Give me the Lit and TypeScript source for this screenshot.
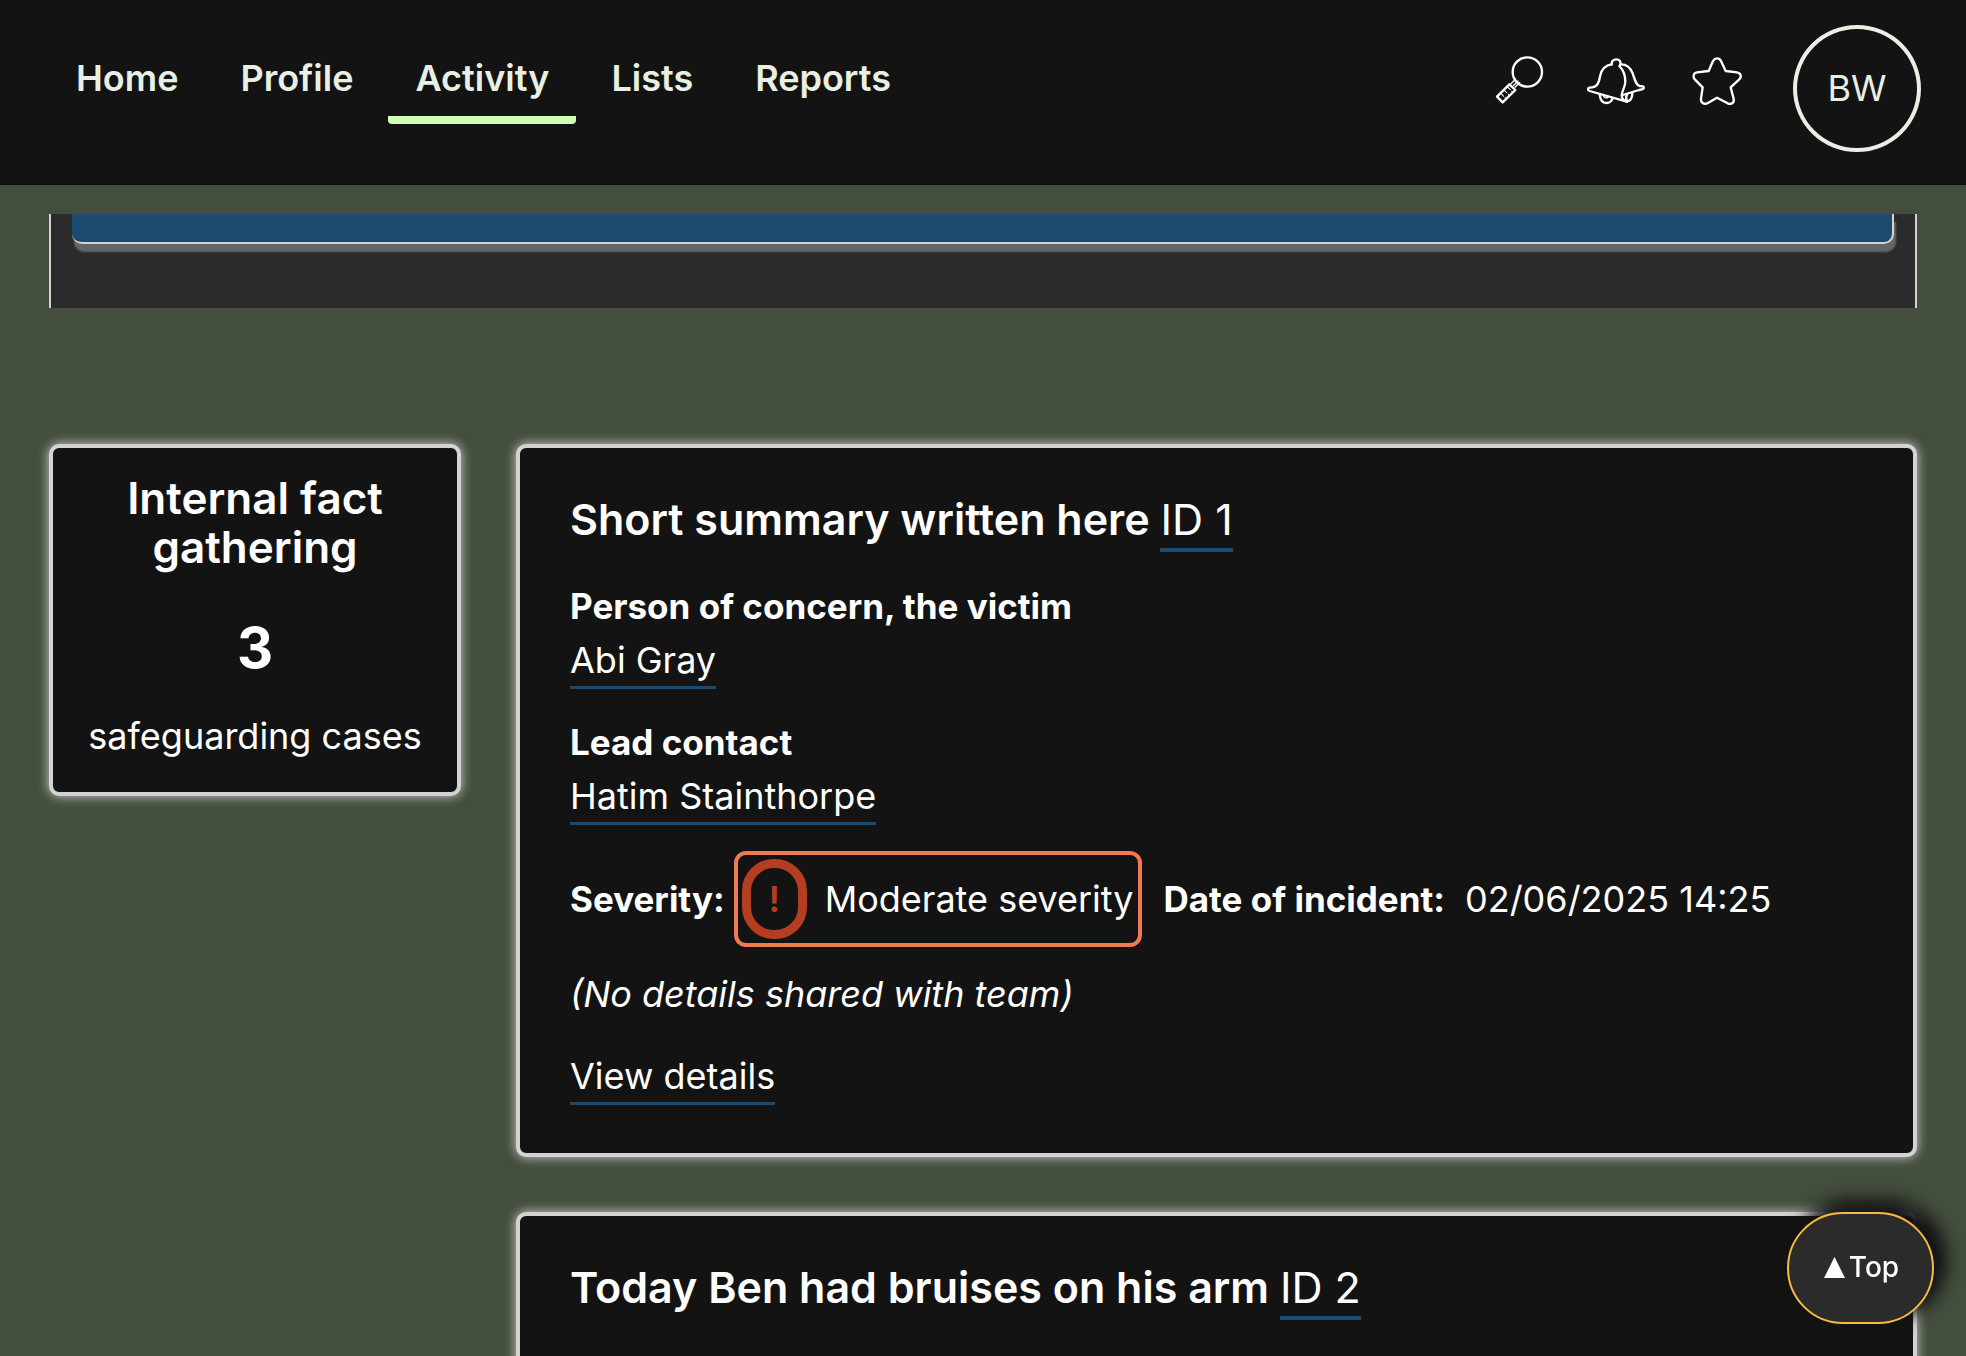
import { LitElement, html, css, svg } from "lit";
import { customElement, property } from "lit/decorators.js";
import { classMap } from "lit/directives/class-map.js";

interface SafeguardingCase {
  id: number;
  summary: string;
  person?: string;
  lead?: string;
  severity?: string;
  date?: string;
}

const NAV = ["Home", "Profile", "Activity", "Lists", "Reports"];

const CASES: SafeguardingCase[] = [
  {
    id: 1,
    summary: "Short summary written here",
    person: "Abi Gray",
    lead: "Hatim Stainthorpe",
    severity: "Moderate severity",
    date: "02/06/2025 14:25",
  },
  { id: 2, summary: "Today Ben had bruises on his arm" },
];

const ICONS = [
  {
    label: "Search",
    width: 48,
    box: "75 138 144 150",
    art: svg`
      <circle cx="172" cy="186" r="44" />
      <path d="M144 213 130 227 M137 207 123 221 M149 218 135 232" stroke-width="4" />
      <path d="M118 223 136 240 98 277 81 260Z" />
      <path d="M122 231 93 260" stroke-width="12" stroke-dasharray="3 11" stroke-linecap="butt" stroke-dashoffset="-5" />
      <path d="M131 240 102 269" stroke-width="6" stroke-dasharray="3 11" stroke-linecap="butt" stroke-dashoffset="-5" />
    `,
  },
  {
    label: "Notifications",
    width: 60,
    box: "351 138 180 150",
    art: svg`
      <path d="M425 163C424 153 431 148 439 148C448 148 455 155 450 166" />
      <path d="M425 163C405 166 395 178 391 196C387 218 382 231 367 232L358 233C352 235 353 241 359 243L470 275" />
      <path d="M448 168C462 182 466 197 466 215C466 232 454 245 455 257C456 267 462 273 470 275" />
      <path d="M453 163C475 163 483 177 488 190C494 208 498 226 509 228C519 228 523 230 521 235C519 238 513 239 507 240L458 255" />
      <path d="M389 253C391 272 399 279 409 279C419 279 425 274 428 264" />
      <path d="M399 255C402 263 408 266 414 262" stroke-width="4" />
      <path d="M487 249C487 262 482 273 470 275 M472 253C468 258 467 265 470 273" />
    `,
  },
  {
    label: "Favourites",
    width: 58,
    box: "663 138 174 150",
    art: svg`
      <path d="M716 183L729 153Q734 145 741 145Q749 145 753 153L767 183L801 187Q810 188 812 196Q814 203 807 209L782 232L791 267Q793 277 786 280Q779 283 773 280L741 263L715 278Q705 284 698 279Q692 275 693 266L698 232L675 209Q669 203 671 195Q673 188 681 187Z" />
    `,
  },
];

@customElement("case-card")
class CaseCard extends LitElement {
  @property({ attribute: false }) item!: SafeguardingCase;

  static styles = css`
    :host {
      display: block;
      background: #131313;
      border: 4px solid #d3d3d3;
      border-radius: 10px;
      box-shadow: 0 0 12px #d3d3d3;
      padding: 39px 50px 50px;
    }
    h2 {
      margin: 0;
      font-size: 43px;
      line-height: 64px;
      font-weight: 600;
    }
    a {
      color: inherit;
      text-decoration: none;
      border-bottom: 3px solid #1d4b6f;
      padding-bottom: 4px;
    }
    h2 a {
      font-weight: 400;
      border-bottom-width: 4px;
      padding-bottom: 3px;
    }
    dl,
    dd,
    p {
      margin: 0;
    }
    dl,
    .details {
      margin-top: 28px;
    }
    dt {
      font-size: 35px;
      font-weight: 700;
    }
    .facts {
      display: flex;
      flex-wrap: wrap;
      column-gap: 22px;
    }
    .fact {
      display: flex;
      align-items: center;
      gap: 9px;
    }
    .when {
      gap: 20px;
    }
    .level {
      display: flex;
      align-items: center;
      gap: 18px;
      border: 4px solid #f07b50;
      border-radius: 12px;
      padding: 4px;
    }
    .mark {
      display: flex;
      align-items: center;
      justify-content: center;
      box-sizing: border-box;
      width: 65px;
      height: 80px;
      border: 9px solid #b53e22;
      border-radius: 32px;
      color: #b53e22;
      font-weight: 600;
    }
    .note {
      margin-top: 20px;
      font-style: italic;
    }
  `;

  render() {
    const c = this.item;
    return html`
      <h2>${c.summary} <a href="#case-${c.id}">ID ${c.id}</a></h2>
      ${c.person
        ? html`
            <dl>
              <dt>Person of concern, the victim</dt>
              <dd><a href="#person">${c.person}</a></dd>
            </dl>
            <dl>
              <dt>Lead contact</dt>
              <dd><a href="#lead">${c.lead}</a></dd>
            </dl>
            <dl class="facts">
              <div class="fact">
                <dt>Severity:</dt>
                <dd class="level"><span class="mark">!</span>${c.severity}</dd>
              </div>
              <div class="fact when">
                <dt>Date of incident:</dt>
                <dd>${c.date}</dd>
              </div>
            </dl>
            <p class="note">(No details shared with team)</p>
            <p class="details"><a href="#details">View details</a></p>
          `
        : null}
    `;
  }
}

@customElement("app-root")
class AppRoot extends LitElement {
  static styles = css`
    :host {
      display: flex;
      flex-direction: column;
      height: 100vh;
      background: #434e3d;
      color: #fff;
      font: 400 36px/54px Inter, "Liberation Sans", sans-serif;
    }
    header {
      flex: none;
      display: flex;
      align-items: flex-start;
      justify-content: space-between;
      box-sizing: border-box;
      min-height: 185px;
      padding: 25px 45px 32px 49px;
      background: #131313;
      color: #e8f0e3;
    }
    nav {
      display: flex;
      gap: 8px;
      padding-top: 26px;
    }
    nav a {
      padding: 0 27px 11px;
      border-bottom: 8px solid transparent;
      border-radius: 0 0 4px 4px;
      color: inherit;
      font-weight: 600;
      text-decoration: none;
    }
    nav a.current {
      border-bottom-color: #cfffb8;
    }
    .tools {
      display: flex;
      align-items: flex-start;
      gap: 44px;
    }
    .tool {
      display: block;
      margin-top: 31px;
      padding: 0;
      border: 0;
      background: none;
      color: #fff;
    }
    .tool svg {
      display: block;
      overflow: visible;
      fill: none;
      stroke: currentColor;
      stroke-width: 7;
      stroke-linecap: round;
      stroke-linejoin: round;
    }
    .avatar {
      width: 128px;
      height: 127px;
      padding: 0 0 2px;
      border: 4px solid #e8f0e3;
      border-radius: 50%;
      background: none;
      color: inherit;
      font: inherit;
    }
    main {
      flex: 1;
      min-height: 0;
      overflow-y: auto;
      scrollbar-width: none;
      padding: 29px 49px 0;
    }
    .panel {
      padding: 0 21px 64px;
      border: solid #d3d3d3;
      border-width: 0 2px;
      background: #2b2b2b;
    }
    .banner {
      height: 28px;
      border: solid #d3d3d3;
      border-width: 0 2px 2px 0;
      border-radius: 0 0 10px 10px;
      background: #1d4b6f;
      box-shadow: 2px 8px 2px #666;
      clip-path: inset(0 -8px -16px -8px);
    }
    .board {
      display: grid;
      grid-template-columns: 5fr 17fr;
      align-items: start;
      gap: 55px;
      margin-top: 136px;
    }
    .summary {
      padding: 26px 20px 29px;
      border: 4px solid #d3d3d3;
      border-radius: 10px;
      background: #131313;
      box-shadow: 0 0 12px #d3d3d3;
      text-align: center;
    }
    .summary h2 {
      margin: 0;
      font-size: 44px;
      line-height: 49px;
      font-weight: 600;
    }
    .summary p {
      margin: 0;
    }
    .count {
      padding: 34px 0 19px;
      font-size: 56px;
      line-height: 84px;
      font-weight: 700;
    }
    .cases {
      display: grid;
      gap: 55px;
    }
    .top {
      position: fixed;
      right: 32px;
      bottom: 32px;
      display: flex;
      align-items: center;
      justify-content: center;
      gap: 4px;
      width: 147px;
      height: 112px;
      padding: 0 0 2px 2px;
      border: 2px solid #f8bb3f;
      border-radius: 56px;
      background: #2b2b2b;
      box-shadow: 8px -8px 16px 5px #131313;
      color: #fff;
      font: 500 28px/42px Inter, "Liberation Sans", sans-serif;
    }
    .top svg {
      fill: currentColor;
    }
  `;

  render() {
    return html`
      <header>
        <nav aria-label="Main">
          ${NAV.map(
            (name) => html`<a
              href="#${name.toLowerCase()}"
              class=${classMap({ current: name === "Activity" })}
              >${name}</a
            >`
          )}
        </nav>
        <div class="tools">
          ${ICONS.map(
            (icon) => html`<button class="tool" aria-label=${icon.label}>
              <svg width=${icon.width} height="50" viewBox=${icon.box}>${icon.art}</svg>
            </button>`
          )}
          <button class="avatar">BW</button>
        </div>
      </header>
      <main>
        <section class="panel"><div class="banner"></div></section>
        <div class="board">
          <section class="summary">
            <h2>Internal fact gathering</h2>
            <p class="count">3</p>
            <p>safeguarding cases</p>
          </section>
          <div class="cases">
            ${CASES.map((item) => html`<case-card .item=${item}></case-card>`)}
          </div>
        </div>
      </main>
      <button class="top">
        <svg width="21" height="21" viewBox="0 0 42 42" aria-hidden="true">
          <path d="M21 0 42 42H0Z" /></svg
        >Top
      </button>
    `;
  }
}
